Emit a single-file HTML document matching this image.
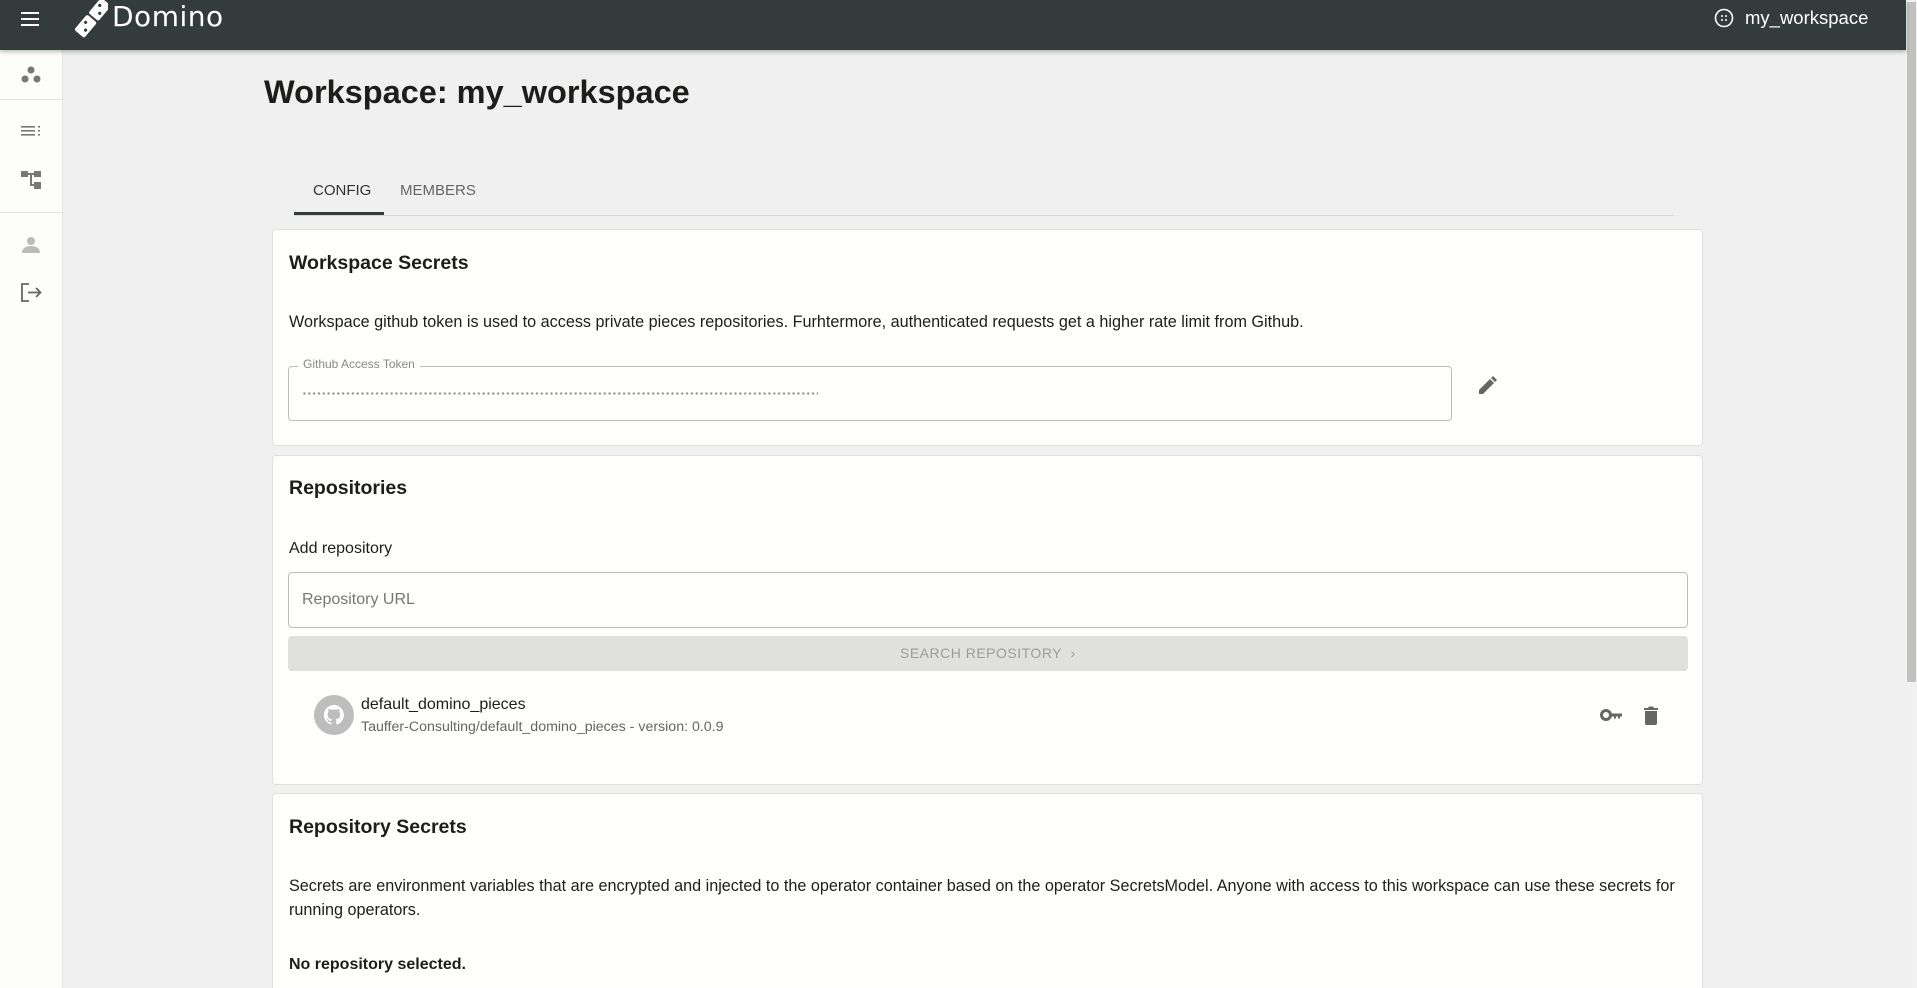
<!DOCTYPE html>
<html style="overflow:hidden"><head><meta charset="utf-8"><style>
*{box-sizing:border-box;margin:0;padding:0}
html,body{width:1917px;height:988px;overflow:hidden}
body{background:#eff0ef;font-family:"Liberation Sans",sans-serif;color:#1d1d1b;position:relative}
.abs{position:absolute}
.hdr{left:0;top:0;width:1906px;height:50px;background:#343c3b;box-shadow:0 2px 4px rgba(0,0,0,.25);z-index:2}
.side{left:0;top:50px;width:63px;height:938px;background:#fdfdfb;border-right:1px solid #e2e2e0}
.sb{left:1906px;top:0;width:11px;height:988px;background:#f1f1f1}
.sbt{left:1907px;top:2px;width:9px;height:680px;background:#c1c1bf}
.card{background:#fefefc;border:1px solid #e0e0de;border-radius:4px;left:272px;width:1431px}
h2{position:absolute;font-size:19.5px;font-weight:bold;color:#1d1d1b}
.t{position:absolute;font-size:16px;white-space:nowrap}
</style></head><body>
<div class="abs hdr">
 <svg class="abs" style="left:21px;top:11px" width="22" height="16"><rect y="1" width="18" height="2" fill="#fff"/><rect y="7" width="18" height="2" fill="#fff"/><rect y="13" width="18" height="2" fill="#fff"/></svg>
 <svg class="abs" style="left:74px;top:0" width="34" height="38"><g transform="rotate(40 17 19)"><rect x="11" y="-4" width="13" height="20" rx="2" fill="#fff"/><rect x="11" y="18" width="13" height="20" rx="2" fill="#fff"/><circle cx="15" cy="3" r="1.6" fill="#343c3b"/><circle cx="20" cy="9" r="1.6" fill="#343c3b"/><circle cx="15" cy="25" r="1.6" fill="#343c3b"/><circle cx="20" cy="31" r="1.6" fill="#343c3b"/></g></svg>
 <div class="abs" style="left:112px;top:0px;font-size:28px;color:#fff;letter-spacing:0.5px;font-family:'DejaVu Sans',sans-serif">Domino</div>
 <svg class="abs" style="left:1714px;top:8px" width="20" height="20"><circle cx="10" cy="10" r="8.5" fill="none" stroke="#fff" stroke-width="1.6"/><circle cx="8" cy="8" r="1" fill="#fff"/><circle cx="12" cy="8" r="1" fill="#fff"/><circle cx="8" cy="12" r="1" fill="#fff"/><circle cx="12" cy="12" r="1" fill="#fff"/></svg>
 <div class="abs" style="left:1745px;top:7px;font-size:18.5px;color:#fff">my_workspace</div>
</div>
<div class="abs side">
 <div class="abs" style="left:0;top:49px;width:63px;height:1px;background:#e2e2e0"></div>
 <div class="abs" style="left:0;top:162px;width:63px;height:1px;background:#e2e2e0"></div>
 <svg class="abs" style="left:20px;top:15px" width="22" height="20"><circle cx="11" cy="5" r="3.5" fill="#777"/><circle cx="5" cy="14" r="3.5" fill="#777"/><circle cx="17" cy="14" r="3.5" fill="#777"/></svg>
 <svg class="abs" style="left:21px;top:76px" width="20" height="12"><g fill="#777"><rect y="0" width="14" height="1.6"/><rect y="4" width="14" height="1.6"/><rect y="8" width="14" height="1.6"/><rect x="17" y="0" width="2" height="1.6"/><rect x="17" y="4" width="2" height="1.6"/><rect x="17" y="8" width="2" height="1.6"/></g></svg>
 <svg class="abs" style="left:21px;top:121px" width="20" height="18"><g fill="#777"><rect x="0" y="0" width="7" height="6"/><rect x="13" y="0" width="7" height="6"/><rect x="13" y="11" width="7" height="7"/><rect x="7" y="2" width="6" height="2"/><rect x="9" y="2" width="2" height="13"/><rect x="9" y="13" width="4" height="2"/></g></svg>
 <svg class="abs" style="left:22px;top:186px" width="18" height="18"><circle cx="9" cy="5" r="4" fill="#bbb"/><path d="M0 17c0-5 4-7 9-7s9 2 9 7z" fill="#bbb"/></svg>
 <svg class="abs" style="left:21px;top:233px" width="21" height="19"><path d="M8 1H1v17h7" fill="none" stroke="#666" stroke-width="1.8"/><path d="M7 9.5h12M15 5l4.5 4.5L15 14" fill="none" stroke="#666" stroke-width="1.8"/></svg>
</div>
<div class="abs" style="left:264px;top:74px;font-size:32.5px;font-weight:bold">Workspace: my_workspace</div>
<div class="abs" style="left:294px;top:215px;width:1380px;height:1px;background:#d6d6d4"></div>
<div class="abs" style="left:294px;top:212px;width:90px;height:3px;background:#343c3b"></div>
<div class="abs" style="left:313px;top:182px;font-size:15px;color:#333">CONFIG</div>
<div class="abs" style="left:400px;top:182px;font-size:15px;color:#666">MEMBERS</div>

<div class="abs card" style="top:229px;height:217px">
 <h2 style="left:16px;top:22px">Workspace Secrets</h2>
 <div class="t" style="left:16px;top:83px;font-size:16.2px">Workspace github token is used to access private pieces repositories. Furhtermore, authenticated requests get a higher rate limit from Github.</div>
 <div class="abs" style="left:15px;top:136px;width:1164px;height:55px;border:1px solid #bdbdbb;border-radius:4px"></div>
 <div class="abs" style="left:25px;top:127px;padding:0 5px;background:#fefefc;font-size:12px;color:#888">Github Access Token</div>
 <div class="abs" style="left:29px;top:162px;width:516px;height:3px;background:radial-gradient(circle,#999 1.1px,transparent 1.4px) 0 0/4.85px 3px repeat-x"></div>
 <svg class="abs" style="left:1205px;top:145px" width="20" height="20"><path d="M1 15v4h4L16 8l-4-4zM13 3l4 4 2-2-4-4z" fill="#666"/></svg>
</div>

<div class="abs card" style="top:455px;height:330px">
 <h2 style="left:16px;top:21px">Repositories</h2>
 <div class="t" style="left:16px;top:84px">Add repository</div>
 <div class="abs" style="left:15px;top:116px;width:1400px;height:56px;border:1px solid #bdbdbb;border-radius:4px"></div>
 <div class="t" style="left:29px;top:135px;color:#777">Repository URL</div>
 <div class="abs" style="left:15px;top:180px;width:1400px;height:35px;background:#e0e0dd;border-radius:4px"></div>
 <div class="t" style="left:627px;top:189px;font-size:14px;color:#9c9c9a;letter-spacing:.5px">SEARCH REPOSITORY &nbsp;›</div>
 <svg class="abs" style="left:41px;top:239px" width="40" height="40"><circle cx="20" cy="20" r="20" fill="#bdbdbd"/><path d="M20 10a10 10 0 0 0-3.2 19.5c.5.1.7-.2.7-.5v-1.8c-2.8.6-3.4-1.3-3.4-1.3-.5-1.2-1.1-1.5-1.1-1.5-.9-.6.1-.6.1-.6 1 .1 1.5 1 1.5 1 .9 1.6 2.4 1.1 3 .9.1-.7.4-1.1.6-1.4-2.2-.3-4.6-1.1-4.6-5 0-1.1.4-2 1-2.7-.1-.3-.4-1.3.1-2.7 0 0 .8-.3 2.7 1a9.500 9.500 0 0 1 5 0c1.9-1.300 2.700-1 2.700-1 .5 1.400.2 2.400.1 2.700.6.700 1 1.600 1 2.700 0 3.900-2.400 4.700-4.600 5 .4.300.7.900.7 1.900v2.800c0 .3.2.6.7.5A10 10 0 0 0 20 10z" fill="#fff"/></svg>
 <div class="t" style="left:88px;top:240px">default_domino_pieces</div>
 <div class="t" style="left:88px;top:263px;font-size:14.2px;color:#666">Tauffer-Consulting/default_domino_pieces - version: 0.0.9</div>
 <svg class="abs" style="left:1327px;top:252px" width="24" height="14"><circle cx="6" cy="7" r="4.5" fill="none" stroke="#666" stroke-width="3"/><path d="M10 5.5h12v3h-2v2h-2v-2h-2v2h-2v-2h-4z" fill="#666"/></svg>
 <svg class="abs" style="left:1370px;top:250px" width="16" height="19"><path d="M1 2h4l1-1.5h4L11 2h4v2H1zM2 5h12v12.5c0 .8-.7 1.5-1.500 1.500h-9C2.700 19 2 18.300 2 17.500z" fill="#666"/></svg>
</div>

<div class="abs card" style="top:793px;height:200px">
 <h2 style="left:16px;top:22px">Repository Secrets</h2>
 <div class="t" style="left:16px;top:83px;font-size:16.2px">Secrets are environment variables that are encrypted and injected to the operator container based on the operator SecretsModel. Anyone with access to this workspace can use these secrets for</div>
 <div class="t" style="left:16px;top:107px;font-size:16.2px">running operators.</div>
 <div class="t" style="left:16px;top:162px;font-weight:bold">No repository selected.</div>
</div>
<div class="abs sb"></div><div class="abs sbt"></div>
</body></html>
